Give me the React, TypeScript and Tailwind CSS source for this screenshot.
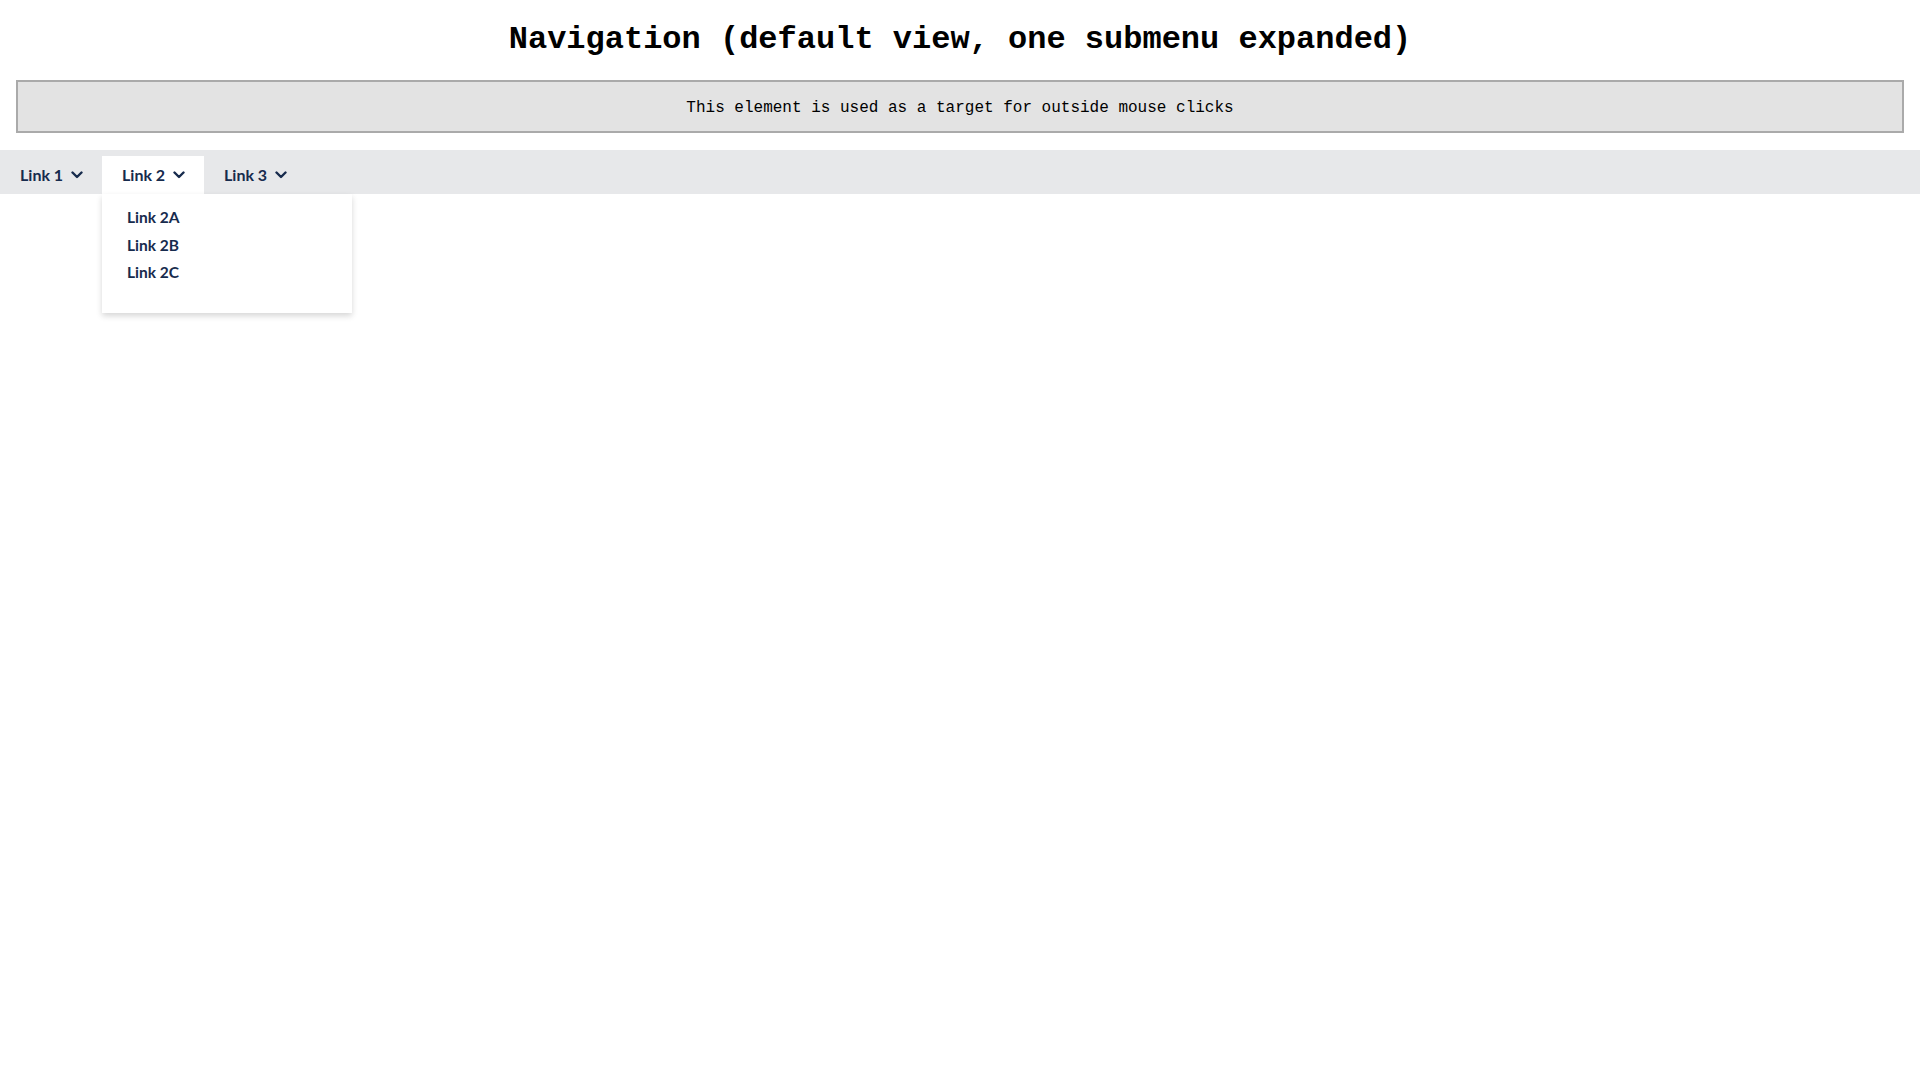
import { useState } from 'react';

const links = [
  { label: 'Link 1', items: ['Link 1A', 'Link 1B', 'Link 1C'] },
  { label: 'Link 2', items: ['Link 2A', 'Link 2B', 'Link 2C'] },
  { label: 'Link 3', items: ['Link 3A', 'Link 3B', 'Link 3C'] },
];

function Chevron() {
  return (
    <svg width="12" height="8" viewBox="0 0 12 8" className="ml-2" aria-hidden="true">
      <path d="M1.5 1.5 L6 6 L10.5 1.5" fill="none" stroke="#172b4d" strokeWidth="2.4" strokeLinecap="round" strokeLinejoin="round" />
    </svg>
  );
}

export default function App() {
  const [open, setOpen] = useState<number | null>(1);

  return (
    <div className="min-h-screen bg-white">
      <h1 className="pt-[16px] text-center text-[32px] leading-[48px] font-bold text-black font-['Liberation_Mono',monospace]">
        Navigation (default view, one submenu expanded)
      </h1>

      <div
        className="mx-4 mt-[16px] h-[53px] flex items-center justify-center border-2 border-[#aaaaaa] bg-[#e3e3e3] pt-[3px] text-[16px] text-black font-['Liberation_Mono',monospace]"
        onClick={() => setOpen(null)}
      >
        This element is used as a target for outside mouse clicks
      </div>

      <nav className="mt-[17px] h-[44px] bg-[#e7e8ea] font-['Lato',sans-serif]">
        <ul className="flex h-full pt-[6px]">
          {links.map((link, i) => (
            <li key={link.label} className="relative">
              <button
                onClick={() => setOpen(open === i ? null : i)}
                className={`flex h-[38px] w-[102px] items-center pl-[20px] text-[16px] font-bold text-[#172b4d] ${
                  open === i ? 'bg-white' : ''
                }`}
              >
                {link.label}
                <Chevron />
              </button>
              {open === i && (
                <ul className="absolute left-0 top-[38px] z-10 w-[250px] h-[119px] bg-white pt-[10px] pl-[25px] shadow-[0_3px_6px_rgba(0,0,0,0.16)]">
                  {link.items.map((item) => (
                    <li key={item} className="text-[15.5px] leading-[27.5px] font-bold text-[#172b4d]">
                      {item}
                    </li>
                  ))}
                </ul>
              )}
            </li>
          ))}
        </ul>
      </nav>
    </div>
  );
}
